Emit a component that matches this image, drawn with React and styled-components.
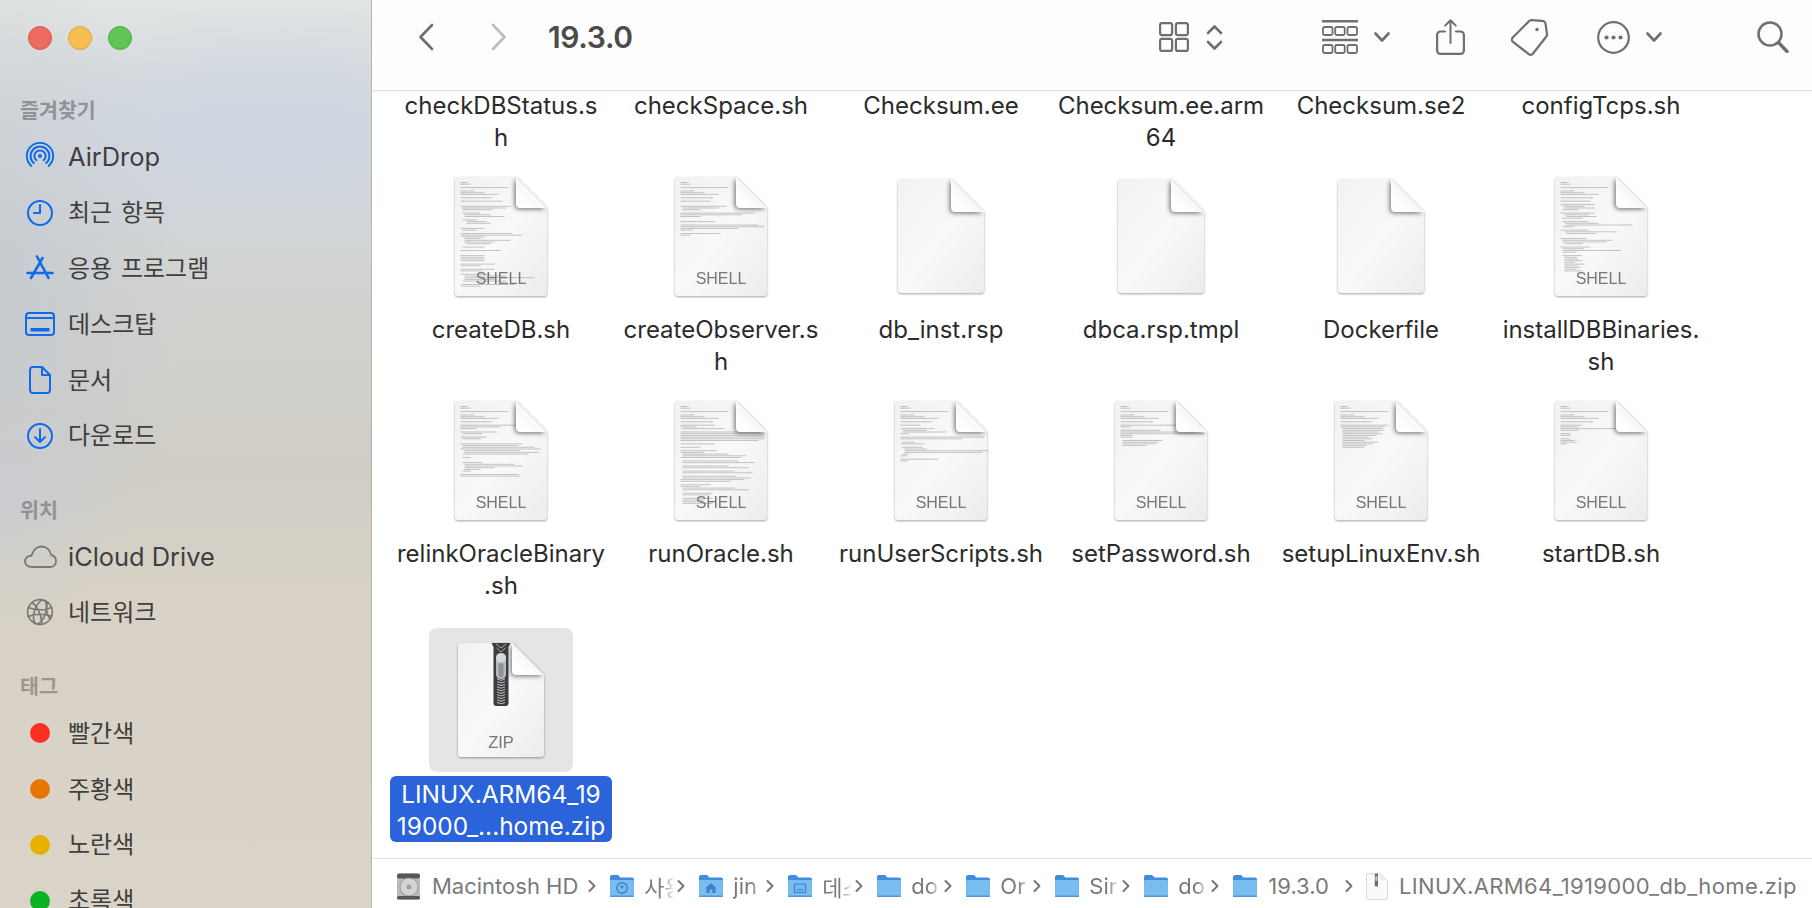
import React, { useId } from 'react';
import styled, { createGlobalStyle } from 'styled-components';

const Global = createGlobalStyle`
  html, body { margin: 0; padding: 0; height: 100%; background: #fff; }
  body { font-family: Inter, "Noto Sans CJK KR", sans-serif; overflow: hidden; }
  #root { height: 100%; }
`;

const Window = styled.div`
  display: flex;
  width: 1812px;
  height: 908px;
  overflow: hidden;
`;

const Sidebar = styled.aside`
  flex: 0 0 372px;
  box-sizing: border-box;
  border-right: 1px solid #b7b4ac;
  overflow: hidden;
  background:
    radial-gradient(ellipse 300px 130px at 270px 135px, rgba(205, 213, 226, 0.9), rgba(203, 212, 226, 0)),
    radial-gradient(ellipse 190px 340px at 0px 300px, rgba(198, 202, 208, 0.95), rgba(198, 202, 208, 0)),
    radial-gradient(ellipse 120px 80px at 0px 490px, rgba(204, 206, 210, 0.9), rgba(204, 206, 210, 0)),
    linear-gradient(180deg, #e0e4e3 0%, #d5d9dc 14%, #d0d0cb 40%, #d0cdc5 52%, #d8d2c6 66%, #d9d4c7 100%);
`;

const Lights = styled.div`
  display: flex;
  gap: 16px;
  height: 24px;
  padding: 26px 0 41px 28px;
`;

const Light = styled.span`
  width: 24px;
  height: 24px;
  box-sizing: border-box;
  border-radius: 50%;
  background: ${p => p.$c};
  border: 1px solid ${p => p.$b};
`;

const SectionTitle = styled.div`
  height: 38px;
  line-height: 40px;
  padding-left: 20px;
  font-size: 20.6px;
  font-weight: 700;
  color: ${p => p.$c || '#909295'};
`;

const Section = styled.section`
  margin-bottom: 27px;
`;

const NavRow = styled.div`
  display: flex;
  align-items: center;
  height: 55.8px;
  color: #403f3d;
`;

const NavText = styled.span`
  font-size: ${p => (p.$latin ? 25.4 : 24)}px;
  padding-bottom: ${p => (p.$latin ? 0 : 4)}px;
  word-spacing: ${p => (p.$latin ? 0 : 2)}px;
`;

const NavIcon = styled.span`
  flex: 0 0 24px;
  width: 24px;
  margin: 0 16px 0 28px;
  display: flex;
  align-items: center;
  justify-content: center;
  & > svg { flex: none; }
`;

const TagDot = styled.span`
  width: 20px;
  height: 20px;
  border-radius: 50%;
  background: ${p => p.$c};
`;

const Main = styled.main`
  flex: 1;
  min-width: 0;
  display: flex;
  flex-direction: column;
  background: #fff;
`;

const Toolbar = styled.header`
  flex: 0 0 91px;
  box-sizing: border-box;
  display: flex;
  align-items: center;
  background: #fdfdfd;
  border-bottom: 1px solid #e3e3e3;
  box-shadow: 0 1px 1px rgba(0, 0, 0, 0.03);
  padding: 0 23px 16px 46px;
  position: relative;
  z-index: 1;
`;

const ToolIcon = styled.span`
  display: flex;
  align-items: center;
  gap: ${p => p.$gap || 0}px;
  margin-left: ${p => p.$ml || 0}px;
  color: ${p => p.$c || '#6f6f6f'};
`;

const Title = styled.h1`
  margin: 0 0 0 41px;
  font-size: 30px;
  line-height: 34px;
  font-weight: 600;
  letter-spacing: -0.35px;
  color: #4b4b4b;
`;

const Spacer = styled.span`
  flex: 1;
`;

const Content = styled.div`
  flex: 1;
  min-height: 0;
  overflow: hidden;
`;

const Grid = styled.div`
  display: grid;
  grid-template-columns: repeat(6, 220px);
  row-gap: 10px;
  margin-top: -3px;
  padding-left: 19px;
`;

const Cell = styled.div`
  display: flex;
  flex-direction: column;
  align-items: center;
  margin-top: ${p => (p.$late ? 16 : 0)}px;
`;

const IconBox = styled.div`
  width: 144px;
  height: 144px;
  display: flex;
  align-items: center;
  justify-content: center;
  margin-bottom: 4px;
  border-radius: 8px;
  background: ${p => (p.$selected ? '#e5e5e5' : 'transparent')};
`;

const Label = styled.div`
  padding: 2px ${p => (p.$selected ? 7 : 8)}px 0;
  min-height: 64px;
  border-radius: 6px;
  text-align: center;
  font-size: ${p => (p.$selected ? 24.4 : 24)}px;
  line-height: 32px;
  white-space: nowrap;
  color: ${p => (p.$selected ? '#fff' : '#2b2b2b')};
  background: ${p => (p.$selected ? '#2a63da' : 'transparent')};
`;

const Line = styled.div``;

const DocSvg = styled.svg`
  display: block;
  overflow: visible;
  filter: drop-shadow(0 1px 1px rgba(0, 0, 0, 0.36));
`;

const DocText = styled.text`
  font-family: "Liberation Sans", Arial, sans-serif;
  fill: #777;
`;

const PathBar = styled.footer`
  flex: 0 0 50px;
  box-sizing: border-box;
  display: flex;
  align-items: center;
  padding: 5px 0 0 24px;
  border-top: 1px solid #e2e2e2;
  background: #fff;
  font-size: 22px;
  color: #7a7a7a;
  white-space: nowrap;
`;

const Crumb = styled.div`
  display: flex;
  align-items: center;
  margin-right: 13px;
`;

const CrumbName = styled.span`
  margin-left: ${p => p.$ml}px;
  letter-spacing: ${p => p.$ls || 0}px;
  ${p => p.$w ? `width: ${p.$w}px; overflow: hidden; -webkit-mask-image: linear-gradient(90deg, #000 55%, transparent 92%); mask-image: linear-gradient(90deg, #000 55%, transparent 92%);` : ''}
`;

const CrumbChevron = styled.svg`
  margin-left: ${p => p.$ml || 0}px;
  flex: none;
`;

/* ---------- file icons ---------- */
const H = '0.7 0.10 _ 0.48 _ 0.14 0.24 0.38 _ 0.32 _ ';
const thumbs = {
  createDB: H + '0.42 _ _ 0.50 1.44 1.30 _ 1.18 2.26 2.40 _ 1.14 3.20 3.24 _ _ 0.24 1.14 _ 0.52 0.62 1.22 2.16 2.46 2.30 3.24 _ 1.22 _ 0.40 _ _ 0.24 0.24 0.24 0.24 _ 0.34 0.20 _ 0.34 0.22 _ 0.30 2.42 2.70 2.30 1.44 _ 0.54 0.20',
  createObserver: H + '0.30 _ _ 0.46 1.36 1.18 _ 0.74 0.62 0.20 _ _ 0.34 _ 0.78 0.84 0.58 0.12 _ 0.40 0.10',
  install: H + '0.30 _ 0.34 1.22 2.30 1.16 _ 0.34 2.24 3.30 1.20 _ 1.26 2.34 3.66 1.12 _ 0.28 2.52 3.30 _ _ 0.26 1.50 1.44 2.18 _ 0.30 1.22 1.58 1.14 _ 1.20 2.12 2.14 2.18 2.10 2.20 2.14 2.16 2.12 2.18',
  relink: H + '0.78 0.40 0.16 _ 0.36 1.20 _ 0.26 1.18 _ _ 0.62 1.56 1.72 0.80 2.56 2.74 1.66 _ 1.8 _ _ 1.20 2.50 2.58 2.30 2.16 1.8 _ 0.58 0.60',
  run: H + '0.34 0.16 1.42 _ 0.82 0.84 0.84 0.84 0.84 0.78 _ 0.34 _ 0.20 _ 0.36 0.24 1.46 1.64 0.60 _ 1.56 1.72 _ 1.46 1.66 _ 1.52 1.70 _ 1.54 1.68 0.64 0.50 _ 0.30 0.20 1.52 1.66 _ 1.30 1.28 _ 1.30 1.22 1.18 1.30',
  userScripts: H + '0.20 _ 0.34 1.24 1.44 0.8 _ 0.84 0.62 _ 1.12 0.24 _ 1.20 2.22 2.84 2.78 1.6 0.6 _ 0.38 0.8',
  setPassword: H + '0.80 0.10 _ 0.40 0.76 0.84 0.12 0.12 _ 1.40 1.36 1.34 1.24',
  setupLinux: H + '0.48 0.44 1.40 1.42 1.36 1.40 1.34 1.26 1.30 1.22 1.36 1.30 1.24 1.22',
  startDB: H + '0.22 0.18 0.60 0.18 _ 0.10 0.10 _ 0.10 0.14 0.16 0.6',
};

const ThumbLines = ({ spec }) => (
  <g stroke="#4a4a4a" strokeWidth="0.6" opacity="0.5">
    {spec.split(' ').map((t, i) => {
      if (t === '_') return null;
      const [ind, w] = t.split('.').map(Number);
      const y = 5.5 + i * 1.7;
      const x = 5.5 + ind * 2;
      return <line key={i} x1={x} x2={x + w} y1={y} y2={y} />;
    })}
  </g>
);

const Doc = ({ w = 92, h = 119, f = 31, spec, label, labelY, children }) => {
  const id = useId();
  return (
    <DocSvg width={w} height={h} viewBox={`0 0 ${w} ${h}`}>
      <defs>
        <linearGradient id={`${id}b`} x1="0" y1="0" x2="1" y2="1">
          <stop offset="0" stopColor="#f1f1f1" />
          <stop offset="0.5" stopColor="#f9f9f9" />
          <stop offset="1" stopColor="#ececec" />
        </linearGradient>
        <linearGradient id={`${id}f`} x1="0" y1="1" x2="1" y2="0">
          <stop offset="0.2" stopColor="#ffffff" />
          <stop offset="1" stopColor="#e8e8e8" />
        </linearGradient>
        <filter id={`${id}s`} x="-40%" y="-40%" width="180%" height="180%">
          <feDropShadow dx="-1.5" dy="1.5" stdDeviation="2" floodColor="#000" floodOpacity="0.5" />
        </filter>
      </defs>
      <path
        d={`M3 0 H${w - f} L${w} ${f} V${h - 3} a3 3 0 0 1 -3 3 H3 a3 3 0 0 1 -3 -3 V3 a3 3 0 0 1 3 -3 Z`}
        fill={`url(#${id}b)`}
      />
      {spec && <ThumbLines spec={spec} />}
      <path
        d={`M${w - f} 0 L${w} ${f} H${w - f + 5} Q${w - f} ${f} ${w - f} ${f - 5} Z`}
        fill={`url(#${id}f)`}
        filter={`url(#${id}s)`}
      />
      {children}
      {label && (
        <DocText x={w / 2} y={labelY} textAnchor="middle" fontSize={label === 'ZIP' ? 16.5 : 16}>
          {label}
        </DocText>
      )}
    </DocSvg>
  );
};

const Shell = ({ spec }) => <Doc spec={thumbs[spec]} label="SHELL" labelY={107} />;
const Plain = () => <Doc w={86} h={114} f={33} />;

const Zip = () => {
  const teeth = [];
  for (let y = 36; y < 60; y += 2.6) {
    teeth.push(<path key={y} d={`M39 ${y} L43 ${y + 1.4} L47 ${y}`} stroke="#cfcfcf" strokeWidth="0.9" fill="none" />);
  }
  return (
    <Doc w={86} h={114} f={32} label="ZIP" labelY={105}>
      <path d="M33.5 0 H52.5 L50.5 4 V60 a3 3 0 0 1 -3 3 H38.5 a3 3 0 0 1 -3 -3 V4 Z" fill="#3a3c3e" />
      <path d="M38 1 L43 5 L48 1 M38.5 5 L43 9 L47.5 5" stroke="#b8b8b8" strokeWidth="0.9" fill="none" />
      {teeth}
      <rect x="38" y="10" width="10" height="26" rx="4.5" fill="#b6babf" />
      <ellipse cx="43" cy="15" rx="5" ry="4.6" fill="#d6d9dc" />
      <rect x="40.5" y="20" width="5" height="14" rx="2" fill="#8e9296" />
    </Doc>
  );
};

const row = [
  { n: ['checkDBStatus.s', 'h'] },
  { n: ['checkSpace.sh'] },
  { n: ['Checksum.ee'] },
  { n: ['Checksum.ee.arm', '64'] },
  { n: ['Checksum.se2'] },
  { n: ['configTcps.sh'] },
];

const files = [
  { n: ['createDB.sh'], i: <Shell spec="createDB" /> },
  { n: ['createObserver.s', 'h'], i: <Shell spec="createObserver" /> },
  { n: ['db_inst.rsp'], i: <Plain /> },
  { n: ['dbca.rsp.tmpl'], i: <Plain /> },
  { n: ['Dockerfile'], i: <Plain /> },
  { n: ['installDBBinaries.', 'sh'], i: <Shell spec="install" /> },
  { n: ['relinkOracleBinary', '.sh'], i: <Shell spec="relink" /> },
  { n: ['runOracle.sh'], i: <Shell spec="run" /> },
  { n: ['runUserScripts.sh'], i: <Shell spec="userScripts" /> },
  { n: ['setPassword.sh'], i: <Shell spec="setPassword" /> },
  { n: ['setupLinuxEnv.sh'], i: <Shell spec="setupLinux" /> },
  { n: ['startDB.sh'], i: <Shell spec="startDB" /> },
];

/* ---------- sidebar icons ---------- */
const blue = '#0f6bea';
const gray = '#7b7873';

const arc = (r, cx = 15, cy = 14, a = 0.72) => {
  const dx = +(r * Math.sin(a)).toFixed(2);
  const dy = +(r * Math.cos(a)).toFixed(2);
  return `M${cx - dx} ${cy + dy} A${r} ${r} 0 1 1 ${cx + dx} ${cy + dy}`;
};

const S = ({ w = 30, h = 30, c = blue, sw = 2, children }) => (
  <svg width={w} height={h} viewBox={`0 0 ${w} ${h}`} fill="none" stroke={c} strokeWidth={sw} strokeLinecap="round" strokeLinejoin="round">
    {children}
  </svg>
);

const AirDropIcon = () => (
  <S>
    <circle cx="15" cy="14" r="2" fill={blue} stroke="none" />
    <path d={arc(5.6)} />
    <path d={arc(9.4)} />
    <path d={arc(13.2)} />
  </S>
);
const ClockIcon = () => (
  <S><circle cx="15" cy="15" r="12" /><path d="M15 7V15H9" /></S>
);
const AppsIcon = () => (
  <S w={28} h={26} sw={2.6}>
    <path d="M11 1.5 L22.5 23 M16.5 3 L5 23" />
    <path d="M1.5 18 H26.5" />
  </S>
);
const DesktopIcon = () => (
  <S h={24}>
    <rect x="1" y="1" width="28" height="22" rx="3" />
    <path d="M1.5 6H28.5" />
    <rect x="5.5" y="16" width="19" height="3.5" fill={blue} stroke="none" />
  </S>
);
const DocIcon = () => (
  <S w={22} h={28}>
    <path d="M4 1 H13 L21 9 V24 a3 3 0 0 1 -3 3 H4 a3 3 0 0 1 -3 -3 V4 a3 3 0 0 1 3 -3 Z" />
    <path d="M13 1 V9 H21" />
  </S>
);
const DownloadIcon = () => (
  <S><circle cx="15" cy="15" r="12" /><path d="M15 8V21M10.2 16.2 15 21l4.8-4.8" /></S>
);
const CloudIcon = () => (
  <S w={33} h={23} c={gray} sw={1.8}>
    <path d="M8 22 C3.5 22 1 19.5 1 16.5 C1 13 4 10.5 7.5 10.8 C9 5 13 1.5 17.5 1.5 C23 1.5 26.5 5.5 27 10 C30 10.5 32 13 32 16 C32 19.5 29.5 22 26 22 Z" />
  </S>
);
const GlobeIcon = () => (
  <S c={gray} sw={1.6}>
    <circle cx="15" cy="15" r="12.4" />
    <ellipse cx="15" cy="15" rx="5.6" ry="12.4" transform="rotate(18 15 15)" />
    <path d="M3.6 10.5 C10 13.5 20 13.5 26.4 10.5 M3.6 19.5 C10 16.5 20 16.5 26.4 19.5 M7 5.5 C12 9 16 16 17 27 M23 5.5 C20 10 22 18 25 22" />
  </S>
);

/* ---------- path bar icons ---------- */
const Chev = ({ ml }) => (
  <CrumbChevron $ml={ml} width="8" height="14" viewBox="0 0 8 14" fill="none" stroke="#767676" strokeWidth="2" strokeLinecap="round" strokeLinejoin="round">
    <path d="M1.5 2 L6.5 7 L1.5 12" />
  </CrumbChevron>
);

const FolderIcon = ({ glyph }) => (
  <svg width="26" height="24" viewBox="0 0 26 24">
    <path d="M1 21 V3 a2 2 0 0 1 2-2 H9 l2.5 2.5 H23 a2 2 0 0 1 2 2 V21 Z" fill="#3f8ddc" />
    <rect x="1" y="6" width="24" height="17" rx="1.6" fill="#79bcf0" />
    <rect x="1" y="21.4" width="24" height="1.6" rx="0.8" fill="#4f95d6" />
    {glyph === 'user' && (
      <g stroke="#3b82c8" fill="none" strokeWidth="1.4">
        <circle cx="13" cy="14" r="5.2" />
        <circle cx="13" cy="12.8" r="1.6" fill="#3b82c8" stroke="none" />
      </g>
    )}
    {glyph === 'home' && <path d="M13 9 L19 14.5 H17.4 V19 H14.4 V15.5 H11.6 V19 H8.6 V14.5 H7 Z" fill="#3b82c8" />}
    {glyph === 'desktop' && (
      <g fill="none" stroke="#3b82c8" strokeWidth="1.2">
        <rect x="7.5" y="10" width="11" height="8.5" rx="1" />
        <rect x="9.5" y="15.2" width="7" height="1.1" fill="#3b82c8" stroke="none" />
      </g>
    )}
  </svg>
);

const DiskIcon = () => (
  <svg width="25" height="27" viewBox="0 0 25 27">
    <rect x="1" y="0.5" width="23" height="26" rx="2.5" fill="#b9bbbd" />
    <rect x="1" y="0.5" width="23" height="5" rx="2" fill="#55585a" />
    <circle cx="13" cy="14" r="9" fill="#d2d4d6" stroke="#8e9092" strokeWidth="0.8" />
    <circle cx="13" cy="14" r="2.5" fill="#a0a2a4" />
    <rect x="1" y="23" width="23" height="3.5" rx="1.5" fill="#55585a" />
  </svg>
);

const SmallZip = () => (
  <svg width="22" height="27" viewBox="0 0 22 27">
    <path d="M2 .5 H14.5 L21.5 7.5 V25 a1.5 1.5 0 0 1-1.5 1.5 H2 A1.5 1.5 0 0 1 .5 25 V2 A1.5 1.5 0 0 1 2 .5 Z" fill="#fafafa" stroke="#dcdcdc" />
    <path d="M14.5 .5 V7.5 H21.5 Z" fill="#ededed" />
    <rect x="8.8" y="0.5" width="3.2" height="13" rx="1" fill="#6b6d70" />
    <rect x="9.4" y="3" width="2" height="5" rx="1" fill="#c8cacc" />
  </svg>
);

const crumbs = [
  ['사용', 'user'],
  ['jin', 'home'],
  ['데스', 'desktop'],
  ['do'],
  ['Or'],
  ['Sir'],
  ['do'],
];

export default function App() {
  return (
    <Window>
      <Global />
      <Sidebar>
        <Lights>
          <Light $c="#ee6a5f" $b="#d9584e" />
          <Light $c="#f6bd4f" $b="#dfa63c" />
          <Light $c="#61c554" $b="#51ad45" />
        </Lights>
        <Section>
          <SectionTitle>즐겨찾기</SectionTitle>
          <NavRow><NavIcon><AirDropIcon /></NavIcon><NavText $latin>AirDrop</NavText></NavRow>
          <NavRow><NavIcon><ClockIcon /></NavIcon><NavText>최근 항목</NavText></NavRow>
          <NavRow><NavIcon><AppsIcon /></NavIcon><NavText>응용 프로그램</NavText></NavRow>
          <NavRow><NavIcon><DesktopIcon /></NavIcon><NavText>데스크탑</NavText></NavRow>
          <NavRow><NavIcon><DocIcon /></NavIcon><NavText>문서</NavText></NavRow>
          <NavRow><NavIcon><DownloadIcon /></NavIcon><NavText>다운로드</NavText></NavRow>
        </Section>
        <Section>
          <SectionTitle>위치</SectionTitle>
          <NavRow><NavIcon><CloudIcon /></NavIcon><NavText $latin>iCloud Drive</NavText></NavRow>
          <NavRow><NavIcon><GlobeIcon /></NavIcon><NavText>네트워크</NavText></NavRow>
        </Section>
        <Section>
          <SectionTitle $c="#9d9689">태그</SectionTitle>
          <NavRow><NavIcon><TagDot $c="#fb2f22" /></NavIcon><NavText>빨간색</NavText></NavRow>
          <NavRow><NavIcon><TagDot $c="#e57700" /></NavIcon><NavText>주황색</NavText></NavRow>
          <NavRow><NavIcon><TagDot $c="#e6b000" /></NavIcon><NavText>노란색</NavText></NavRow>
          <NavRow><NavIcon><TagDot $c="#0ab324" /></NavIcon><NavText>초록색</NavText></NavRow>
        </Section>
      </Sidebar>
      <Main>
        <Toolbar>
          <ToolIcon>
            <svg width="16" height="28" viewBox="0 0 16 28" fill="none" stroke="currentColor" strokeWidth="2.6" strokeLinecap="round" strokeLinejoin="round"><path d="M14 2 L2.5 14 L14 26" /></svg>
          </ToolIcon>
          <ToolIcon $ml={57} $c="#bcbcbc">
            <svg width="16" height="28" viewBox="0 0 16 28" fill="none" stroke="currentColor" strokeWidth="2.6" strokeLinecap="round" strokeLinejoin="round"><path d="M2 2 L13.5 14 L2 26" /></svg>
          </ToolIcon>
          <Title>19.3.0</Title>
          <Spacer />
          <ToolIcon $gap={17}>
            <svg width="30" height="30" viewBox="0 0 30 30" fill="none" stroke="currentColor" strokeWidth="2.2"><rect x="1.1" y="1.1" width="12" height="12" rx="2" /><rect x="16.9" y="1.1" width="12" height="12" rx="2" /><rect x="1.1" y="16.9" width="12" height="12" rx="2" /><rect x="16.9" y="16.9" width="12" height="12" rx="2" /></svg>
            <svg width="17" height="27" viewBox="0 0 17 27" fill="none" stroke="currentColor" strokeWidth="2.6" strokeLinecap="round" strokeLinejoin="round"><path d="M2 9 L8.5 2.5 L15 9 M2 18 L8.5 24.5 L15 18" /></svg>
          </ToolIcon>
          <ToolIcon $ml={99} $gap={16}>
            <svg width="36" height="34" viewBox="0 0 36 34" fill="none" stroke="currentColor" strokeWidth="1.8"><path d="M0 1.2H36M0 20H36" strokeWidth="2.4" /><rect x="1" y="7" width="9.5" height="8" rx="1.5" /><rect x="13.2" y="7" width="9.5" height="8" rx="1.5" /><rect x="25.5" y="7" width="9.5" height="8" rx="1.5" /><rect x="1" y="25" width="9.5" height="8" rx="1.5" /><rect x="13.2" y="25" width="9.5" height="8" rx="1.5" /><rect x="25.5" y="25" width="9.5" height="8" rx="1.5" /></svg>
            <svg width="16" height="10" viewBox="0 0 16 10" fill="none" stroke="currentColor" strokeWidth="2.6" strokeLinecap="round" strokeLinejoin="round"><path d="M1.5 1.5 L8 8.5 L14.5 1.5" /></svg>
          </ToolIcon>
          <ToolIcon $ml={46}>
            <svg width="29" height="36" viewBox="0 0 29 36" fill="none" stroke="currentColor" strokeWidth="2.2" strokeLinecap="round" strokeLinejoin="round"><path d="M9 12.5 H4.5 a3.4 3.4 0 0 0 -3.4 3.4 V31.5 a3.4 3.4 0 0 0 3.4 3.4 H24.5 a3.4 3.4 0 0 0 3.4 -3.4 V15.9 a3.4 3.4 0 0 0 -3.4 -3.4 H20" /><path d="M14.5 24 V1.5 M9.2 6.6 L14.5 1.3 L19.8 6.6" strokeWidth="2" /></svg>
          </ToolIcon>
          <ToolIcon $ml={46}>
            <svg width="37" height="37" viewBox="0 0 37 37" fill="none" stroke="currentColor" strokeWidth="2.2" strokeLinejoin="round"><path d="M20.5 1.2 L31 1.8 A3.5 3.5 0 0 1 34.6 5.2 L36 15 A3.5 3.5 0 0 1 35 18 L21.8 34.8 A2.8 2.8 0 0 1 17.8 35.2 L2 22.8 A2.8 2.8 0 0 1 1.5 18.8 L17.8 2.4 A3.5 3.5 0 0 1 20.5 1.2 Z" /><circle cx="26" cy="10.5" r="1.7" fill="currentColor" stroke="none" /></svg>
          </ToolIcon>
          <ToolIcon $ml={49} $gap={16}>
            <svg width="33" height="33" viewBox="0 0 33 33" fill="none" stroke="currentColor" strokeWidth="2.2"><circle cx="16.5" cy="16.5" r="15.3" /><circle cx="9.5" cy="16.5" r="2.1" fill="currentColor" stroke="none" /><circle cx="16.5" cy="16.5" r="2.1" fill="currentColor" stroke="none" /><circle cx="23.5" cy="16.5" r="2.1" fill="currentColor" stroke="none" /></svg>
            <svg width="16" height="10" viewBox="0 0 16 10" fill="none" stroke="currentColor" strokeWidth="2.6" strokeLinecap="round" strokeLinejoin="round"><path d="M1.5 1.5 L8 8.5 L14.5 1.5" /></svg>
          </ToolIcon>
          <ToolIcon $ml={95}>
            <svg width="32" height="32" viewBox="0 0 32 32" fill="none" stroke="currentColor" strokeWidth="2.5" strokeLinecap="round"><circle cx="13" cy="13" r="11.5" /><path d="M21.5 21.5 L30 30.5" strokeWidth="3.4" /></svg>
          </ToolIcon>
        </Toolbar>
        <Content>
          <Grid>
            {row.map(f => (
              <Cell key={f.n[0]}>
                <Label>{f.n.map(l => <Line key={l}>{l}</Line>)}</Label>
              </Cell>
            ))}
            {files.map(f => (
              <Cell key={f.n[0]}>
                <IconBox>{f.i}</IconBox>
                <Label>{f.n.map(l => <Line key={l}>{l}</Line>)}</Label>
              </Cell>
            ))}
            <Cell $late>
              <IconBox $selected><Zip /></IconBox>
              <Label $selected>
                <Line>LINUX.ARM64_19</Line>
                <Line>19000_...home.zip</Line>
              </Label>
            </Cell>
          </Grid>
        </Content>
        <PathBar>
          <Crumb>
            <DiskIcon />
            <CrumbName $ml={11}>Macintosh HD</CrumbName>
            <Chev ml={10} />
          </Crumb>
          {crumbs.map(([name, glyph], i) => (
            <Crumb key={i}>
              <FolderIcon glyph={glyph} />
              <CrumbName $ml={9} $w={33}>{name}</CrumbName>
              <Chev />
            </Crumb>
          ))}
          <Crumb>
            <FolderIcon />
            <CrumbName $ml={10}>19.3.0</CrumbName>
            <Chev ml={16} />
          </Crumb>
          <Crumb>
            <SmallZip />
            <CrumbName $ml={11} $ls={0.37}>LINUX.ARM64_1919000_db_home.zip</CrumbName>
          </Crumb>
        </PathBar>
      </Main>
    </Window>
  );
}
